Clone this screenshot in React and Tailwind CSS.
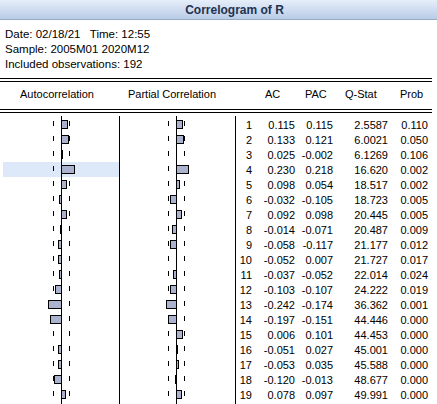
import React from 'react';

const rows = [
  [1, '0.115', '0.115', '2.5587', '0.110'],
  [2, '0.133', '0.121', '6.0021', '0.050'],
  [3, '0.025', '-0.002', '6.1269', '0.106'],
  [4, '0.230', '0.218', '16.620', '0.002'],
  [5, '0.098', '0.054', '18.517', '0.002'],
  [6, '-0.032', '-0.105', '18.723', '0.005'],
  [7, '0.092', '0.098', '20.445', '0.005'],
  [8, '-0.014', '-0.071', '20.487', '0.009'],
  [9, '-0.058', '-0.117', '21.177', '0.012'],
  [10, '-0.052', '0.007', '21.727', '0.017'],
  [11, '-0.037', '-0.052', '22.014', '0.024'],
  [12, '-0.103', '-0.107', '24.222', '0.019'],
  [13, '-0.242', '-0.174', '36.362', '0.001'],
  [14, '-0.197', '-0.151', '44.446', '0.000'],
  [15, '0.006', '0.101', '44.453', '0.000'],
  [16, '-0.051', '0.027', '45.001', '0.000'],
  [17, '-0.053', '0.035', '45.588', '0.000'],
  [18, '-0.120', '-0.013', '48.677', '0.000'],
  [19, '0.078', '0.097', '49.991', '0.000'],
];

const SCALE = 55; // px per unit of correlation
const BAND = 8; // +/- 2/sqrt(n) in px

// one row of the bar chart: axis, dashed bands, bar
const BarCell = ({ value, axis, width, height = 15, highlight = false }) => {
  const w = value == null ? 0 : Math.round(Math.abs(value) * SCALE);
  const x = value < 0 ? axis - w : axis;
  return (
    <svg width={width} height={height} className={`block ${highlight ? 'bg-[#dde8f9]' : ''}`}>
      <line x1={axis + 0.5} y1={0} x2={axis + 0.5} y2={height} stroke="#000" strokeWidth="1" />
      {value != null && (
        <>
          <line x1={axis - BAND + 0.5} y1={4} x2={axis - BAND + 0.5} y2={9} stroke="#000" strokeWidth="1" />
          <line x1={axis + BAND + 0.5} y1={4} x2={axis + BAND + 0.5} y2={9} stroke="#000" strokeWidth="1" />
          {w > 0 && (
            <rect x={x + 0.5} y={3.5} width={w} height={8} fill="#aab2cd" stroke="#000" strokeWidth="1" />
          )}
        </>
      )}
    </svg>
  );
};

const Row = ({ r, height = 15 }) => {
  const empty = !r;
  return (
    <div className="flex" style={{ height }}>
      <div className="w-[120px] border-r border-black pl-[3px]">
        <BarCell value={empty ? null : parseFloat(r[1])} axis={58} width={116} height={height} highlight={!empty && r[0] === 4} />
      </div>
      <div className="w-[116px] border-r border-black">
        <BarCell value={empty ? null : parseFloat(r[2])} axis={56} width={115} height={height} />
      </div>
      {!empty && (
        <div className="flex leading-[17px] text-[11px] text-black whitespace-nowrap">
          <span className="w-[16px] text-right">{r[0]}</span>
          <span className="w-[43px] text-right">{r[1]}</span>
          <span className="w-[38px] text-right">{r[2]}</span>
          <span className="w-[55px] text-right">{r[3]}</span>
          <span className="w-[40px] text-right">{r[4]}</span>
        </div>
      )}
    </div>
  );
};

export default function App() {
  return (
    <div className="w-[437px] h-[404px] overflow-hidden bg-white font-['Liberation_Sans',Arial,sans-serif] text-black">
      {/* title bar */}
      <div className="h-[20px] pl-[32px] border-b border-[#97abc8] bg-gradient-to-b from-[#e6eef9] to-[#b9cce7] flex items-center justify-center">
        <span className="text-[12px] font-bold text-[#23314f] leading-none">Correlogram of R</span>
      </div>

      {/* header info */}
      <div className="pt-[7px] pl-[5px] text-[11.5px] leading-[15px]">
        <div className="whitespace-pre">Date: 02/18/21   Time: 12:55</div>
        <div>Sample: 2005M01 2020M12</div>
        <div>Included observations: 192</div>
      </div>

      <div className="mt-[6px] w-[432px] h-[4px] border-t border-b border-black" />
      <div className="h-[27px] pt-[5px] flex text-[11px] leading-[15px] whitespace-nowrap">
        <span className="ml-[20px] w-[108px]">Autocorrelation</span>
        <span className="w-[137px]">Partial Correlation</span>
        <span className="w-[40px]">AC</span>
        <span className="w-[40px]">PAC</span>
        <span className="w-[55px]">Q-Stat</span>
        <span>Prob</span>
      </div>
      <div className="w-[432px] h-[4px] border-t border-b border-black" />
      <div className="h-[3px]" />

      {/* correlogram rows */}
      <Row height={1} />
      {rows.map(r => (
        <Row key={r[0]} r={r} />
      ))}
      <Row height={6} />
    </div>
  );
}
